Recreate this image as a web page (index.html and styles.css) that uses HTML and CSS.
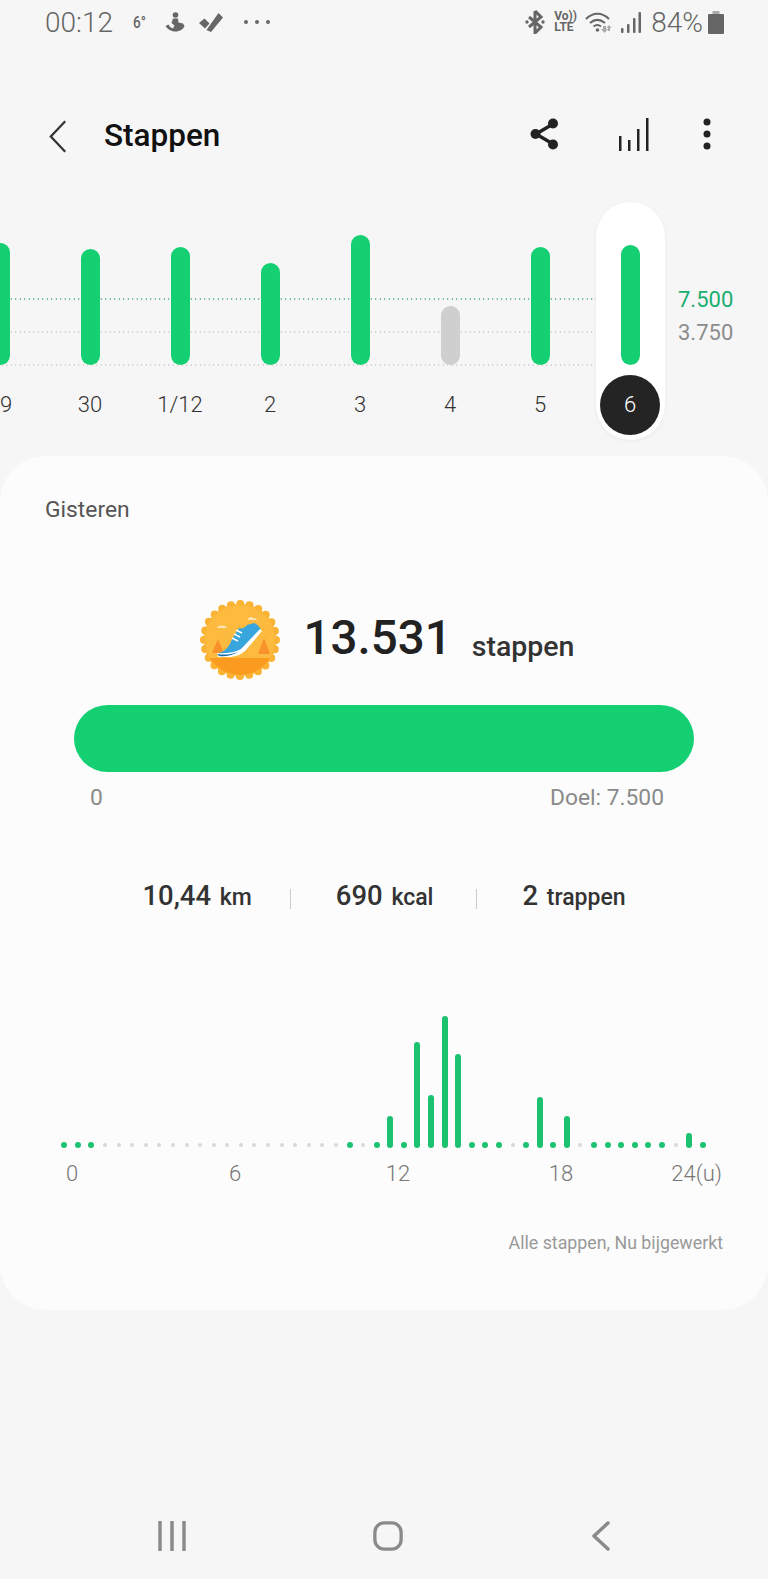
FILE: index.html
```html
<!DOCTYPE html>
<html lang="nl">
<head>
  <meta charset="UTF-8" />
  <meta name="viewport" content="width=device-width, initial-scale=1.0" />
  <title>Stappen</title>
  <link rel="stylesheet" href="styles.css">
</head>
<body>
  <div class="page">
    <div class="status">
      <div class="status-left">
        <span class="time">00:12</span>
        <span class="temp">6°</span>
        <svg class="ic-fig" viewBox="0 0 20 20"><circle cx="10.500" cy="3" r="2.800"/><path d="M8 6.500h5l.5 4 4.500 1 1.500 2.500c-1 3-4.500 5.500-9 5.500s-8-2.500-10-5.500l3-1.500 1.500 2.500 3 1.500 1.500-3-3-2.500z"/></svg>
        <svg class="ic-check" viewBox="0 0 24 20"><path d="M0 11l5.500-4.500 5 5L6 16.500zM7.500 18L19.500 1 24 5.500 12 20z"/></svg>
        <svg class="ic-more" viewBox="0 0 26 4"><circle cx="2" cy="2" r="2"/><circle cx="13" cy="2" r="2"/><circle cx="24" cy="2" r="2"/></svg>
      </div>
      <div class="status-right">
        <svg class="ic-bt" viewBox="0 0 20 24"><path d="M10 1v22l6-6-12-10M10 1l6 6-12 10" fill="none" stroke-width="3"/><circle cx="2" cy="12" r="1.700" class="fill"/><circle cx="18" cy="12" r="1.700" class="fill"/></svg>
        <span class="volte">Vo))<br>LTE</span>
        <svg class="ic-wifi" viewBox="0 0 27 21"><path d="M1 7c7-7 16-7 23 0M5 11c4.500-4 10-4 15 0M8.500 14.500c2.500-2 5-2 7.500 0" fill="none" stroke-width="2"/><circle cx="12.500" cy="18" r="1.800" class="fill"/><path d="M18 14h3v3h2l-3.500 4-3.500-4h2z" class="fill dim"/><path d="M24 13l2.500 3H25v3h-2v-3h-1.500z" class="fill dim"/></svg>
        <svg class="ic-signal" viewBox="0 0 20 21"><rect x="0" y="16" width="2.500" height="5" rx="1"/><rect x="6" y="12" width="2.500" height="9" rx="1"/><rect x="12" y="6" width="2.500" height="15" rx="1"/><rect x="17.500" y="0" width="2.500" height="21" rx="1"/></svg>
        <span class="batt-text">84%</span>
        <svg class="ic-batt" viewBox="0 0 16 23"><rect x="4.500" y="0" width="7" height="3" class="dim"/><rect x="0" y="3" width="16" height="20" rx="1"/></svg>
      </div>
    </div>

    <header class="appbar">
      <svg class="ic-back" viewBox="0 0 20 36"><path d="M18 1L2 18l16 17" fill="none"/></svg>
      <h1>Stappen</h1>
      <div class="actions">
        <svg class="ic-share" viewBox="0 0 28 32"><path d="M23 6L6 16l17 10" fill="none" stroke-width="3.500"/><circle cx="23" cy="5.500" r="5"/><circle cx="5.500" cy="16" r="5"/><circle cx="23" cy="26.500" r="5"/></svg>
        <svg class="ic-stats" viewBox="0 0 30 33"><rect x="0" y="18" width="2.500" height="15"/><rect x="9" y="22" width="2.500" height="11"/><rect x="18" y="11" width="2.500" height="22"/><rect x="27" y="0" width="2.500" height="33"/></svg>
        <svg class="ic-dots" viewBox="0 0 8 32"><circle cx="4" cy="4" r="3.500"/><circle cx="4" cy="16" r="3.500"/><circle cx="4" cy="28" r="3.500"/></svg>
      </div>
    </header>

    <section class="trend">
      <div class="line line-goal"></div>
      <div class="line line-half"></div>
      <div class="line line-zero"></div>
      <div class="scale scale-goal">7.500</div>
      <div class="scale scale-half">3.750</div>
      <div class="days">
        <div class="day"><div class="plot"><i class="pill" style="height:122px"></i></div><span class="num">29</span></div>
        <div class="day"><div class="plot"><i class="pill" style="height:116px"></i></div><span class="num">30</span></div>
        <div class="day"><div class="plot"><i class="pill" style="height:118px"></i></div><span class="num">1/12</span></div>
        <div class="day"><div class="plot"><i class="pill" style="height:102px"></i></div><span class="num">2</span></div>
        <div class="day"><div class="plot"><i class="pill" style="height:130px"></i></div><span class="num">3</span></div>
        <div class="day"><div class="plot"><i class="pill low" style="height:59px"></i></div><span class="num">4</span></div>
        <div class="day"><div class="plot"><i class="pill" style="height:118px"></i></div><span class="num">5</span></div>
        <div class="day active"><div class="plot"><i class="pill" style="height:120px"></i></div><span class="num">6</span></div>
      </div>
    </section>

    <main class="card">
      <div class="when">Gisteren</div>

      <div class="summary">
        <svg class="badge" viewBox="0 0 80 80">
          <defs><clipPath id="disc"><circle cx="40" cy="40" r="35"/></clipPath></defs>
          <circle cx="40" cy="40" r="36" fill="#fbb334" stroke="#fbb334" stroke-width="8" stroke-linecap="round" stroke-dasharray="0 9.425"/>
          <circle cx="40" cy="40" r="36" fill="#fbb334"/>
          <g clip-path="url(#disc)">
            <rect x="0" y="0" width="80" height="80" fill="#fcbb3e"/>
            <path d="M18 39l6 14H12zM64 38l6 16H58z" fill="#f9922a"/>
            <path d="M0 58h80v22H0z" fill="#fa9a1f"/>
            <path d="M17 28c1-3 4-3 5-2 2-1 4 0 5 2zM48 19c1-2 4-3 5-1 2 0 4 1 4 2H48z" fill="#fff" opacity=".6"/>
            <path d="M18 53c6-1 11-5 14-14l7-11c3 1 6 0 8-3l7-2c3 1 5 3 7 7L46 50l-12 5H20z" fill="#38a6dc"/>
            <path d="M17 53c7 1 17 0 24-4l19-20 2 2-16 19c-5 5-12 7-17 7H18z" fill="#fff"/>
            <path d="M17 54c6 1 13 1 21-2-5 3-12 5-19 4z" fill="#1b6fa8"/>
            <path d="M32 38l6 3M34 34l6 3M36 30l6 3" stroke="#fff" stroke-width="1.500"/>
          </g>
        </svg>
        <span class="count">13.531</span>
        <span class="unit">stappen</span>
      </div>

      <div class="goalbar"></div>
      <div class="goal-labels"><span>0</span><span>Doel: 7.500</span></div>

      <div class="stats">
        <span><b>10,44</b> km</span>
        <i class="sep sep-first"></i>
        <span><b>690</b> kcal</span>
        <i class="sep"></i>
        <span><b>2</b> trappen</span>
      </div>

      <div class="hours">
        <i class="dot"></i><i class="dot"></i><i class="dot"></i>
        <i class="off"></i><i class="off"></i><i class="off"></i><i class="off"></i><i class="off"></i><i class="off"></i>
        <i class="off"></i><i class="off"></i><i class="off"></i><i class="off"></i><i class="off"></i><i class="off"></i>
        <i class="off"></i><i class="off"></i><i class="off"></i><i class="off"></i><i class="off"></i><i class="off"></i>
        <i class="dot"></i><i class="off"></i><i class="dot"></i>
        <i class="bar" style="height:32px"></i>
        <i class="dot"></i>
        <i class="bar" style="height:106px"></i>
        <i class="bar" style="height:53px"></i>
        <i class="bar" style="height:132px"></i>
        <i class="bar" style="height:94px"></i>
        <i class="dot"></i><i class="dot"></i><i class="dot"></i><i class="off"></i><i class="dot"></i>
        <i class="bar" style="height:51px"></i>
        <i class="dot"></i>
        <i class="bar" style="height:32px"></i>
        <i class="off"></i>
        <i class="dot"></i><i class="dot"></i><i class="dot"></i><i class="dot"></i><i class="dot"></i><i class="dot"></i>
        <i class="off"></i>
        <i class="bar" style="height:15px"></i>
        <i class="dot"></i>
      </div>
      <div class="hour-labels"><span>0</span><span>6</span><span>12</span><span>18</span><span>24(u)</span></div>

      <div class="note">Alle stappen, Nu bijgewerkt</div>
    </main>

    <nav class="navbar">
      <svg class="ic-recent" viewBox="0 0 28 30"><path d="M2 1v28M14 1v28M26 1v28" fill="none"/></svg>
      <svg class="ic-home" viewBox="0 0 32 32"><rect x="2" y="2" width="28" height="28" rx="10" fill="none"/></svg>
      <svg class="ic-prev" viewBox="0 0 18 30"><path d="M16 2L2 15l14 13" fill="none"/></svg>
    </nav>
  </div>
</body>
</html>
```

FILE: styles.css
```css
body {
  margin: 0;
  font-family: 'Roboto', 'Liberation Sans', sans-serif;
  background: #f6f6f6;
  color: #222;
}
.page {
  width: 768px;
  height: 1579px;
  display: flex;
  flex-direction: column;
  overflow: hidden;
}

/* status bar */
.status {
  height: 44px;
  padding: 0 44px 0 45px;
  display: flex;
  align-items: center;
  justify-content: space-between;
  color: #666;
}
.status svg {
  fill: #666;
  stroke: #666;
  stroke-width: 0;
  display: block;
}
.status-left, .status-right {
  display: flex;
  align-items: center;
}
.time {
  font-size: 28px;
  font-weight: 300;
  width: 68px;
}
.temp {
  font-size: 16px;
  font-weight: 500;
  margin-left: 20px;
  width: 13px;
  transform: scaleX(.85);
  transform-origin: left;
}
.ic-fig { width: 20px; height: 20px; margin-left: 19px; }
.ic-check { width: 24px; height: 20px; margin-left: 14px; }
.ic-more { width: 26px; height: 4px; margin-left: 21px; }
.ic-bt { width: 20px; height: 24px; }
.status svg .fill { fill: #666; stroke: none; }
.status svg .dim { fill: #aaa; stroke: none; }
.volte {
  font-size: 12px;
  font-weight: 700;
  line-height: 11px;
  margin-left: 9px;
  width: 25px;
}
.ic-wifi { width: 27px; height: 21px; margin-left: 6px; }
.ic-signal { width: 20px; height: 21px; margin-left: 9px; }
.batt-text {
  font-size: 28px;
  font-weight: 300;
  margin-left: 10px;
}
.ic-batt { width: 16px; height: 23px; margin-left: 5px; }

/* title */
.appbar {
  height: 60px;
  margin-top: 62px;
  padding: 0 57px 0 49px;
  display: flex;
  align-items: center;
}
.appbar h1 {
  margin: -2px 0 0 37px;
  font-size: 31.5px;
  font-weight: 500;
  color: #111;
}
.ic-back { width: 18px; height: 35px; stroke: #333; stroke-width: 2.5; }
.actions {
  margin: -4px 0 0 auto;
  display: flex;
  align-items: center;
  gap: 54px;
  fill: #222;
  stroke: #222;
  stroke-width: 0;
}
.ic-share { width: 28px; height: 32px; margin-right: 7px; }
.ic-stats { width: 30px; height: 33px; }
.ic-dots { width: 8px; height: 32px; }

/* day trend */
.trend {
  position: relative;
  height: 238px;
  margin-top: 36px;
}
.line {
  position: absolute;
  left: 0;
  width: 600px;
  height: 2px;
  background: radial-gradient(circle, #c9c9c9 0 1px, transparent 1px) 0 0 / 4.5px 2px;
}
.line-goal { top: 96px; background: radial-gradient(circle, #4fa585 0 1px, transparent 1px) 0 0 / 4.5px 2px; }
.line-half { top: 129px; }
.line-zero { top: 162px; }
.scale {
  position: absolute;
  left: 678px;
  font-size: 22px;
  line-height: 26px;
}
.scale-goal { top: 85px; color: #1aae6f; }
.scale-half { top: 118px; color: #8c8c8c; }
.days {
  position: relative;
  display: flex;
  margin-left: -45px;
}
.day {
  width: 90px;
  height: 238px;
  display: flex;
  flex-direction: column;
  align-items: center;
}
.day.active {
  width: 69px;
  margin: 0 10px 0 10.5px;
  background: #fff;
  border-radius: 35px;
  box-shadow: 0 1px 4px rgba(0, 0, 0, .05);
}
.plot {
  height: 163px;
  display: flex;
  align-items: flex-end;
}
.pill {
  display: block;
  width: 19px;
  border-radius: 10px;
  background: #14d072;
}
.pill.low { background: #cfcfcf; }
.num {
  width: 60px;
  height: 60px;
  margin-top: 10px;
  font-size: 22px;
  font-weight: 300;
  line-height: 60px;
  text-align: center;
  color: #333;
}
.active .num {
  border-radius: 50%;
  background: #242424;
  color: #fff;
}

/* card */
.card {
  height: 854px;
  margin-top: 16px;
  box-sizing: border-box;
  padding-top: 40px;
  background: #fcfcfc;
  border-radius: 46px;
}
.when {
  padding-left: 45px;
  font-size: 22.8px;
  line-height: 28px;
  color: #555;
}
.summary {
  margin-top: 76px;
  padding-left: 6px;
  display: flex;
  align-items: center;
  justify-content: center;
}
.badge { width: 80px; height: 80px; display: block; }
.count {
  margin: -4px 0 0 24px;
  font-size: 47.5px;
  font-weight: 500;
  color: #222;
}
.unit {
  margin: 12px 0 0 20px;
  font-size: 28.5px;
  font-weight: 500;
  color: #333;
}
.goalbar {
  height: 67px;
  margin: 25px 74px 0;
  border-radius: 34px;
  background: #14d072;
}
.goal-labels {
  margin-top: 12px;
  padding: 0 104px 0 90px;
  display: flex;
  justify-content: space-between;
  font-size: 22.8px;
  line-height: 28px;
  color: #8a8a8a;
}
.stats {
  margin-top: 68px;
  display: flex;
  align-items: center;
  justify-content: center;
  font-size: 23px;
  font-weight: 500;
  line-height: 32px;
  color: #333;
}
.stats b {
  font-size: 27.5px;
  font-weight: 500;
  margin-right: 3px;
}
.sep {
  width: 1px;
  height: 20px;
  margin: 4px 45px 0 43px;
  background: #ccc;
}
.sep-first { margin-left: 38px; }
.hours {
  height: 140px;
  width: 652px;
  margin: 94px 0 0 57.5px;
  display: grid;
  grid-template-columns: repeat(48, 1fr);
  align-items: end;
  justify-items: center;
}
.dot {
  width: 6px;
  height: 6px;
  border-radius: 50%;
  background: #1cc270;
}
.off {
  width: 4px;
  height: 4px;
  margin-bottom: 1px;
  border-radius: 50%;
  background: #d8d8d8;
}
.bar {
  width: 6px;
  border-radius: 3px;
  background: #1cc270;
}
.hour-labels {
  margin: 12px 0 0 -9.5px;
  padding-right: 46px;
  display: grid;
  grid-template-columns: repeat(4, 163px) 1fr;
  text-align: center;
  font-size: 22px;
  font-weight: 300;
  line-height: 28px;
  color: #777;
}
.hour-labels span:last-child { text-align: right; }
.note {
  margin-top: 43px;
  padding-right: 45px;
  text-align: right;
  font-size: 17.8px;
  line-height: 24px;
  color: #999;
}

/* bottom navigation */
.navbar {
  margin-top: auto;
  height: 30px;
  padding: 0 158px 28px 158px;
  display: flex;
  align-items: center;
  justify-content: space-between;
  stroke: #8a8a8a;
  stroke-width: 3.5;
  stroke-linecap: round;
  stroke-linejoin: round;
}
.navbar svg { display: block; }
.ic-recent { width: 28px; height: 30px; }
.ic-home { width: 30px; height: 30px; margin-right: 2px; }
.ic-prev { width: 18px; height: 30px; }
```
